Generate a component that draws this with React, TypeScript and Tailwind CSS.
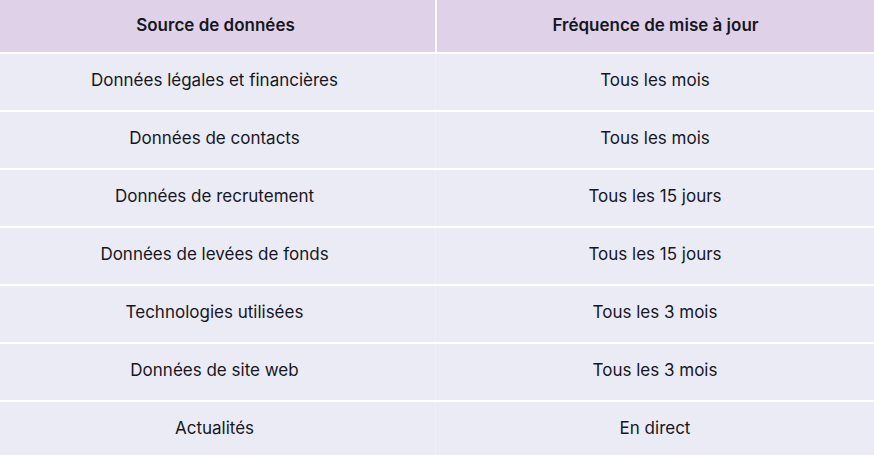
const rows: [string, string][] = [
  ['Données légales et financières', 'Tous les mois'],
  ['Données de contacts', 'Tous les mois'],
  ['Données de recrutement', 'Tous les 15 jours'],
  ['Données de levées de fonds', 'Tous les 15 jours'],
  ['Technologies utilisées', 'Tous les 3 mois'],
  ['Données de site web', 'Tous les 3 mois'],
  ['Actualités', 'En direct'],
]

export default function App() {
  return (
    <div className="w-[874px] h-[455px] overflow-hidden bg-white font-['Inter',sans-serif] text-[17px] text-[#17161f]">
      <div className="grid grid-cols-[437px_1fr] h-[52px] bg-[#dfd2e8] border-b-2 border-white box-content font-semibold">
        <div className="flex items-center justify-center pr-1 border-r-2 border-white">Source de données</div>
        <div className="flex items-center justify-center">Fréquence de mise à jour</div>
      </div>
      {rows.map(([source, freq]) => (
        <div key={source} className="grid grid-cols-[436px_1fr] h-[56px] box-content bg-[#ebebf6] border-b-2 border-white">
          <div className="flex items-center justify-center pb-[2px] pr-[6px] border-r border-[#f0f0f9]">{source}</div>
          <div className="flex items-center justify-center pb-[2px]">{freq}</div>
        </div>
      ))}
    </div>
  )
}
